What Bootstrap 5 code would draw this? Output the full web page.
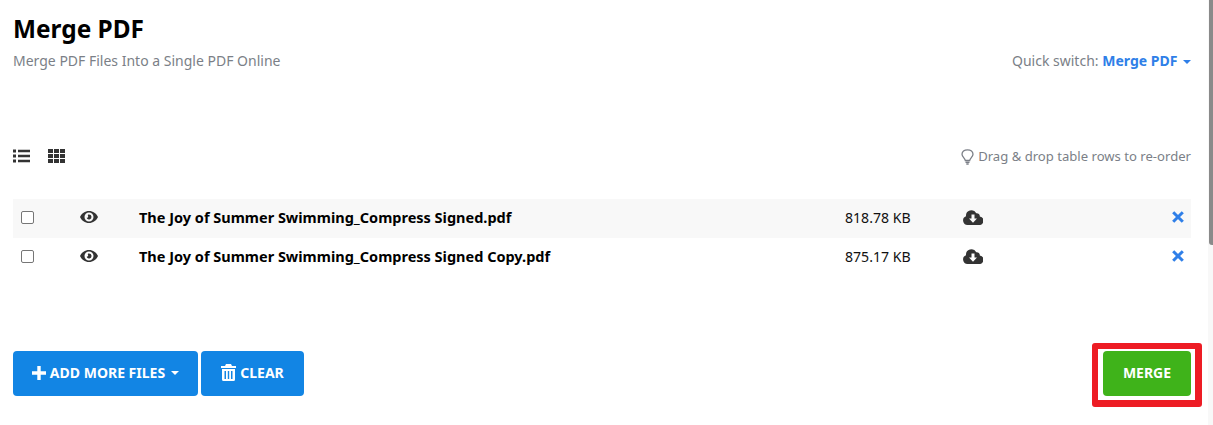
<!DOCTYPE html>
<html lang="en">
<head>
    <meta charset="UTF-8">
    <title>Merge PDF</title>
    <link rel="stylesheet" href="https://cdn.jsdelivr.net/npm/bootstrap@5.3.0/dist/css/bootstrap.min.css">
    <style>
        html, body { height: 425px; overflow: hidden; }
        body { font-family: "Noto Sans", "Liberation Sans", sans-serif; font-size: 14px; color: #111; }
        .page-wrap { width: 1209px; height: 425px; padding: 0 18px 0 13px; }
        .scroll-rail { position: fixed; top: 0; right: 0; width: 5px; height: 425px; background: #f8f8f8; }
        .scroll-thumb { width: 4px; height: 245px; margin-left: 1px; background: #8a8a8a; border-radius: 0 0 0 3px; }
        .page-title { font-size: 24.400px; font-weight: 700; color: #000; line-height: 32px; margin: 0; padding-top: 13px; }
        .page-sub { color: #7b7f87; line-height: 20px; margin-top: 6px; }
        .quick-switch { color: #7b7f87; line-height: 20px; }
        .quick-switch a { color: #2f7fe8; font-weight: 700; text-decoration: none; }
        .caret-down { display: inline-block; width: 0; height: 0; border: 4px solid transparent; border-top-color: currentColor; border-bottom: 0; vertical-align: middle; margin-left: 2px; }
        .view-bar { margin-top: 74px; height: 22px; }
        .view-icons { gap: 18px; }
        .view-icons svg { display: block; fill: #333; }
        .hint-text { color: #7b7f87; font-size: 13.100px; margin-top: 2px; }
        .file-table { margin-top: 32px; }
        .file-row { height: 39px; }
        .file-row:nth-child(odd) { background: #f8f8f8; }
        .cell-check { width: 58px; padding-left: 8px; }
        .cell-check .form-check-input { width: 13px; height: 13px; margin: -2px 0 0; display: block; border-color: #767676; border-radius: 2px; }
        .cell-eye { width: 68px; padding-left: 9px; }
        .cell-eye svg, .cell-dl svg, .cell-x svg { display: block; margin-top: -3px; }
        .cell-name { width: 706px; font-size: 14.500px; font-weight: 700; color: #000; padding-bottom: 2px; }
        .cell-size { width: 118px; font-size: 14.100px; padding-bottom: 2px; }
        .cell-dl { flex: 1; }
        .cell-x { padding-right: 7px; }
        .action-bar { margin-top: 74px; }
        .btn-blue, .btn-green { height: 45px; border: 0; border-radius: 4px; padding: 0 0 2px; color: #fff; font-weight: 700; font-size: 14px; text-transform: uppercase; display: inline-flex; align-items: center; justify-content: center; }
        .btn-blue { background: #1285e4; }
        .btn-blue:hover { background: #1285e4; color: #fff; }
        .btn-add { width: 185px; }
        .btn-clear { width: 103px; margin-left: 3px; }
        .btn-green { background: #3fb31a; width: 88px; display: flex; }
        .btn-green:hover { background: #3fb31a; color: #fff; }
        .red-box { border-style: solid; border-color: #ed1c24; border-width: 6px 7px 7px 6px; border-radius: 3px; padding: 2px 4px 4px 5px; margin: -8px -11px -11px 0; }
    </style>
</head>
<body>
    <div class="page-wrap">
        <div class="d-flex justify-content-between align-items-end">
            <div>
                <h1 class="page-title">Merge PDF</h1>
                <div class="page-sub">Merge PDF Files Into a Single PDF Online</div>
            </div>
            <div class="quick-switch">Quick switch: <a href="#">Merge PDF <span class="caret-down"></span></a></div>
        </div>

        <div class="view-bar d-flex justify-content-between align-items-center">
            <div class="view-icons d-flex">
                <svg width="17" height="14" viewBox="0 0 17 14"><path d="M0 .5h3v3H0zM5 .8h12v2.400H5zM0 5.500h3v3H0zM5 5.800h12v2.400H5zM0 10.500h3v3H0zM5 10.800h12v2.400H5z"/></svg>
                <svg width="17" height="14" viewBox="0 0 17 14"><path d="M0 0h5v4H0zM6 0h5v4H6zM12 0h5v4h-5zM0 5h5v4H0zM6 5h5v4H6zM12 5h5v4h-5zM0 10h5v4H0zM6 10h5v4H6zM12 10h5v4h-5z"/></svg>
            </div>
            <div class="hint-text d-flex align-items-center gap-1">
                <svg width="13" height="16" viewBox="0 0 13 16" fill="none" stroke="#7b7f87" stroke-width="1.300"><path d="M4.300 11.500C4 9 1 8 1 5.300 1 2.800 3.200.8 6.500.8S12 2.800 12 5.300c0 2.700-3 3.700-3.300 6.200z"/><path d="M4.500 13.200h4M5.300 15h2.400" stroke-width="1.500"/></svg>
                <span>Drag &amp; drop table rows to re-order</span>
            </div>
        </div>

        <div class="file-table">
            <div class="file-row d-flex align-items-center">
                <div class="cell-check"><input class="form-check-input" type="checkbox"></div>
                <div class="cell-eye"><svg width="18" height="12" viewBox="0 0 18 12" fill="#333"><path fill-rule="evenodd" d="M9 0c4 0 7.400 2.400 9 6-1.600 3.600-5 6-9 6s-7.400-2.400-9-6c1.600-3.600 5-6 9-6zm0 1.500a4.500 4.500 0 1 0 0 9 4.500 4.500 0 0 0 0-9zM9 3.500a2.500 2.500 0 1 1-2.400 3.200c.8.300 1.900-.6 1.500-1.500-.2-.5-.4-1-.2-1.500.3-.1.700-.2 1.100-.2z"/></svg></div>
                <div class="cell-name">The Joy of Summer Swimming_Compress Signed.pdf</div>
                <div class="cell-size">818.78 KB</div>
                <div class="cell-dl"><svg width="20" height="15" viewBox="0 0 20 15" fill="#333"><path fill-rule="evenodd" d="M4.500 15A4.500 4.500 0 0 1 3 6.300 5.500 5.500 0 0 1 13.300 3.200 3 3 0 0 1 16.800 6.500 4.300 4.300 0 0 1 15.500 15zM8.500 4.500v4H6l4 4.300 4-4.300h-2.500v-4z"/></svg></div>
                <div class="cell-x"><svg width="12" height="12" viewBox="0 0 12 12" fill="none" stroke="#2f7fe8" stroke-width="3"><path d="M1.200 1.200l9.600 9.600M10.800 1.200l-9.600 9.600"/></svg></div>
            </div>
            <div class="file-row d-flex align-items-center">
                <div class="cell-check"><input class="form-check-input" type="checkbox"></div>
                <div class="cell-eye"><svg width="18" height="12" viewBox="0 0 18 12" fill="#333"><path fill-rule="evenodd" d="M9 0c4 0 7.400 2.400 9 6-1.600 3.600-5 6-9 6s-7.400-2.400-9-6c1.600-3.600 5-6 9-6zm0 1.500a4.500 4.500 0 1 0 0 9 4.500 4.500 0 0 0 0-9zM9 3.500a2.500 2.500 0 1 1-2.400 3.200c.8.300 1.900-.6 1.500-1.500-.2-.5-.4-1-.2-1.500.3-.1.700-.2 1.100-.2z"/></svg></div>
                <div class="cell-name">The Joy of Summer Swimming_Compress Signed Copy.pdf</div>
                <div class="cell-size">875.17 KB</div>
                <div class="cell-dl"><svg width="20" height="15" viewBox="0 0 20 15" fill="#333"><path fill-rule="evenodd" d="M4.500 15A4.500 4.500 0 0 1 3 6.300 5.500 5.500 0 0 1 13.300 3.200 3 3 0 0 1 16.800 6.500 4.300 4.300 0 0 1 15.500 15zM8.500 4.500v4H6l4 4.300 4-4.300h-2.500v-4z"/></svg></div>
                <div class="cell-x"><svg width="12" height="12" viewBox="0 0 12 12" fill="none" stroke="#2f7fe8" stroke-width="3"><path d="M1.200 1.200l9.600 9.600M10.800 1.200l-9.600 9.600"/></svg></div>
            </div>
        </div>

        <div class="action-bar d-flex justify-content-between align-items-start">
            <div class="d-flex">
                <button type="button" class="btn btn-blue btn-add gap-1">
                    <svg width="14" height="14" viewBox="0 0 14 14" fill="#fff"><path d="M5.300 0h3.400v5.300H14v3.400H8.700V14H5.300V8.700H0V5.300h5.300z"/></svg>
                    Add more files <span class="caret-down"></span>
                </button>
                <button type="button" class="btn btn-blue btn-clear gap-1">
                    <svg width="15" height="17" viewBox="0 0 15 17" fill="#fff"><path fill-rule="evenodd" d="M5 0h5l1 2h4v2H0V2h4zM1 5h13v10.500a1.500 1.500 0 0 1-1.500 1.500h-10A1.500 1.500 0 0 1 1 15.500zM3.500 7v8H5V7zM6.800 7v8h1.400V7zM10 7v8h1.500V7z"/></svg>
                    Clear
                </button>
            </div>
            <div class="red-box"><button type="button" class="btn btn-green">Merge</button></div>
        </div>
    </div>
    <div class="scroll-rail"><div class="scroll-thumb"></div></div>
    <script src="https://cdn.jsdelivr.net/npm/bootstrap@5.3.0/dist/js/bootstrap.bundle.min.js"></script>
</body>
</html>
